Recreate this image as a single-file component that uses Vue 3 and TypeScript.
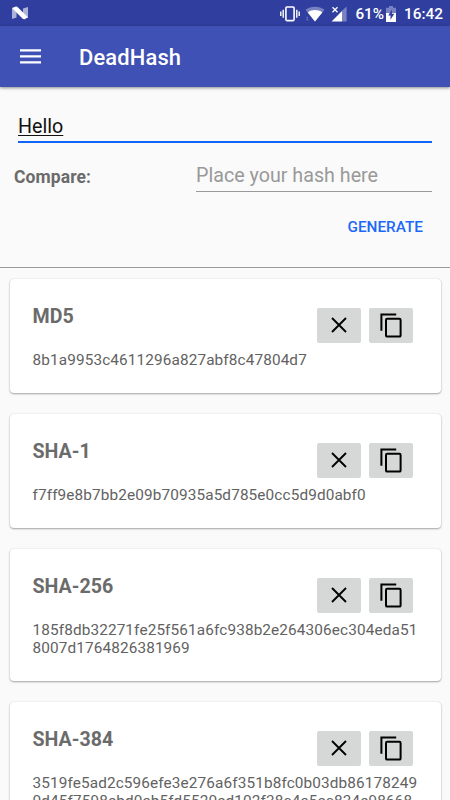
<script setup lang="ts">
import { ref } from 'vue'

interface HashEntry {
  name: string
  value: string
}

const source = ref('Hello')
const compare = ref('')

const hashes: HashEntry[] = [
  { name: 'MD5', value: '8b1a9953c4611296a827abf8c47804d7' },
  { name: 'SHA-1', value: 'f7ff9e8b7bb2e09b70935a5d785e0cc5d9d0abf0' },
  { name: 'SHA-256', value: '185f8db32271fe25f561a6fc938b2e264306ec304eda518007d1764826381969' },
  {
    name: 'SHA-384',
    value: '3519fe5ad2c596efe3e276a6f351b8fc0b03db861782490d45f7598ebd0ab5fd5520ed102f38c4a5ec834e98668035fc',
  },
]
</script>

<template>
  <div class="screen">
    <header class="status">
      <svg class="nougat" width="18" height="14" viewBox="0 0 18 14">
        <path d="M1 2.5 5.5 1v10.5L1 13zM12 2.5 17 1v10.5L12 13z" fill="#fff" opacity=".6" />
        <path d="M1 2 5 .6Q6 .5 7 1.5L17 11.2 13.6 13.3Q12.5 13.5 11.5 12.6z" fill="#fff" />
      </svg>
      <div class="indicators">
        <svg width="20" height="16" viewBox="0 0 20 16" fill="none" stroke="#fff">
          <rect x="5.9" y="1" width="8.2" height="13.6" rx="1" stroke-width="1.6" />
          <path d="M3.2 3.8v8M.8 5.6v4.4M16.8 3.8v8M19.2 5.6v4.4" stroke-width="1.4" />
        </svg>
        <svg class="wifi" width="20" height="16" viewBox="0 0 20 16" fill="#fff">
          <path d="M10 15.5.5 3.7C6-.3 14-.3 19.5 3.7z" opacity=".35" />
          <path d="M10 15.5 2.7 6.4C7 3.2 13 3.2 17.3 6.4z" />
          <path d="M1.2 12.2h2.2L2.3 10.8zM1.2 13.3h2.2l-1.1 1.4z" opacity=".4" />
        </svg>
        <svg class="signal" width="16" height="16" viewBox="0 0 16 16" fill="#fff">
          <path d="M15.6.5V15.5H11V4.8z" opacity=".35" />
          <path d="M11 5V15.5H.6z" />
          <path d="m1.5 1.2 5 5m0-5-5 5" stroke="#fff" stroke-width="1.3" />
        </svg>
        <span class="percent">61%</span>
        <svg class="battery" width="10" height="16" viewBox="0 0 10 16">
          <path d="M3 0h4v1.8h3V7H0V1.8h3z" fill="#fff" opacity=".35" />
          <path d="M0 7h10v9H0z" fill="#fff" />
          <path d="M5.9 3.6 2.2 9.6h2.3v4.2l3.8-6H5.9z" fill="#303f9f" />
        </svg>
        <span class="clock">16:42</span>
      </div>
    </header>

    <nav class="toolbar">
      <button class="menu" aria-label="Menu">
        <svg width="21" height="15" viewBox="0 0 21 15" fill="#fff">
          <path d="M0 .3h21v2.2H0zM0 6.3h21v2.2H0zM0 12.2h21v2.2H0z" />
        </svg>
      </button>
      <h1>DeadHash</h1>
    </nav>

    <section class="form">
      <input v-model="source" class="source" aria-label="Text" spellcheck="false" />
      <div class="compare-row">
        <label for="compare">Compare:</label>
        <input id="compare" v-model="compare" class="compare" placeholder="Place your hash here" />
      </div>
      <button class="generate">GENERATE</button>
    </section>

    <main class="list">
      <article v-for="hash in hashes" :key="hash.name" class="card">
        <div class="card-head">
          <h2>{{ hash.name }}</h2>
          <div class="actions">
            <button aria-label="Clear">
              <svg width="16" height="16" viewBox="0 0 16 16" fill="none" stroke="#000" stroke-width="1.9">
                <path d="m1 1 14 14M15 1 1 15" />
              </svg>
            </button>
            <button aria-label="Copy">
              <svg width="22" height="25" viewBox="0 0 22 25" fill="none" stroke="#000" stroke-width="2">
                <path d="M1.4 17.8V1.4h14.8" />
                <rect x="6" y="5.8" width="14.6" height="17.8" rx="1.2" />
              </svg>
            </button>
          </div>
        </div>
        <p>{{ hash.value }}</p>
      </article>
    </main>
  </div>
</template>

<style>
body {
  margin: 0;
}
</style>

<style scoped>
.screen {
  display: flex;
  flex-direction: column;
  box-sizing: border-box;
  width: 100%;
  height: 800px;
  overflow: hidden;
  background: #fafafa;
  font-family: Roboto, sans-serif;
}
svg {
  display: block;
  flex: none;
}
button,
input {
  padding: 0;
  border: 0;
  border-radius: 0;
  background: none;
  font-family: inherit;
  outline: none;
}
.status {
  display: flex;
  flex: none;
  justify-content: space-between;
  height: 26px;
  padding: 0 7px 0 11px;
  background: #303f9f;
  color: #fff;
}
.nougat {
  margin-top: 6px;
}
.indicators {
  display: flex;
  align-items: flex-start;
  padding-top: 5.5px;
}
.wifi {
  margin-left: 5px;
}
.signal {
  margin-left: 6px;
}
.percent,
.clock {
  font-size: 15.33px;
  font-weight: 500;
  line-height: 17px;
}
.percent {
  margin-left: 8px;
}
.battery {
  margin-left: 2px;
}
.clock {
  margin-left: 8px;
}
.toolbar {
  position: relative;
  display: flex;
  flex: none;
  align-items: center;
  height: 61.3px;
  padding-left: 20px;
  background: #3f51b5;
  box-shadow: 0 1px 3px rgba(0, 0, 0, 0.45);
}
h1 {
  margin: 3px 0 0 38px;
  color: #fff;
  font-size: 21.9px;
  font-weight: 500;
  letter-spacing: 0.15px;
  line-height: 26px;
}
.form {
  display: flex;
  flex: none;
  flex-direction: column;
  box-sizing: border-box;
  height: 180.7px;
  padding: 24px 18px 0 14px;
  border-bottom: 1.3px solid #999;
}
.source {
  height: 30px;
  margin-left: 4px;
  padding-top: 1px;
  box-sizing: content-box;
  height: 29px;
  border-bottom: 2px solid #0f66f8;
  color: #111;
  font-size: 19.7px;
  text-decoration: underline;
  text-decoration-thickness: 1.2px;
  text-underline-offset: 2px;
}
.compare-row {
  display: flex;
  align-items: center;
  justify-content: space-between;
  height: 48px;
  margin-top: 9px;
}
.compare-row label {
  padding-top: 1px;
  color: #6b6b6b;
  font-size: 17.5px;
  font-weight: 700;
  letter-spacing: 0.1px;
}
.compare {
  width: 236px;
  height: 31px;
  border-bottom: 1px solid #999;
  color: #111;
  font-size: 19.7px;
}
.compare::placeholder {
  color: #999;
  opacity: 1;
}
.generate {
  align-self: flex-end;
  height: 36px;
  margin: 9px 9px 0 0;
  color: #1b68f9;
  font-size: 15.33px;
  font-weight: 500;
}
.list {
  display: flex;
  flex: none;
  flex-direction: column;
  gap: 21px;
  padding: 10.6px 9.5px 0;
}
.card {
  box-sizing: border-box;
  min-height: 114px;
  padding: 24px 22px 24px 23px;
  border-radius: 4px;
  background: #fff;
  box-shadow: 0 1px 2px rgba(0, 0, 0, 0.33), 0 0 2px rgba(0, 0, 0, 0.1);
}
.card-head {
  display: flex;
  justify-content: space-between;
  height: 48px;
}
h2 {
  margin: 2.6px 0 0;
  color: #6b6b6b;
  font-size: 19.6px;
  font-weight: 700;
  line-height: 23px;
}
.actions {
  display: flex;
  gap: 8px;
  padding: 5px 5.2px 0 0;
}
.actions button {
  display: flex;
  align-items: center;
  justify-content: center;
  width: 44px;
  height: 35px;
  border-radius: 2px;
  background: #d6d8d7;
}
.card p {
  padding-top: 0.6px;
  margin: 0 0 -0.6px;
  color: #626262;
  font-size: 15.33px;
  letter-spacing: 0.125px;
  line-height: 18px;
  word-break: break-all;
}
</style>
